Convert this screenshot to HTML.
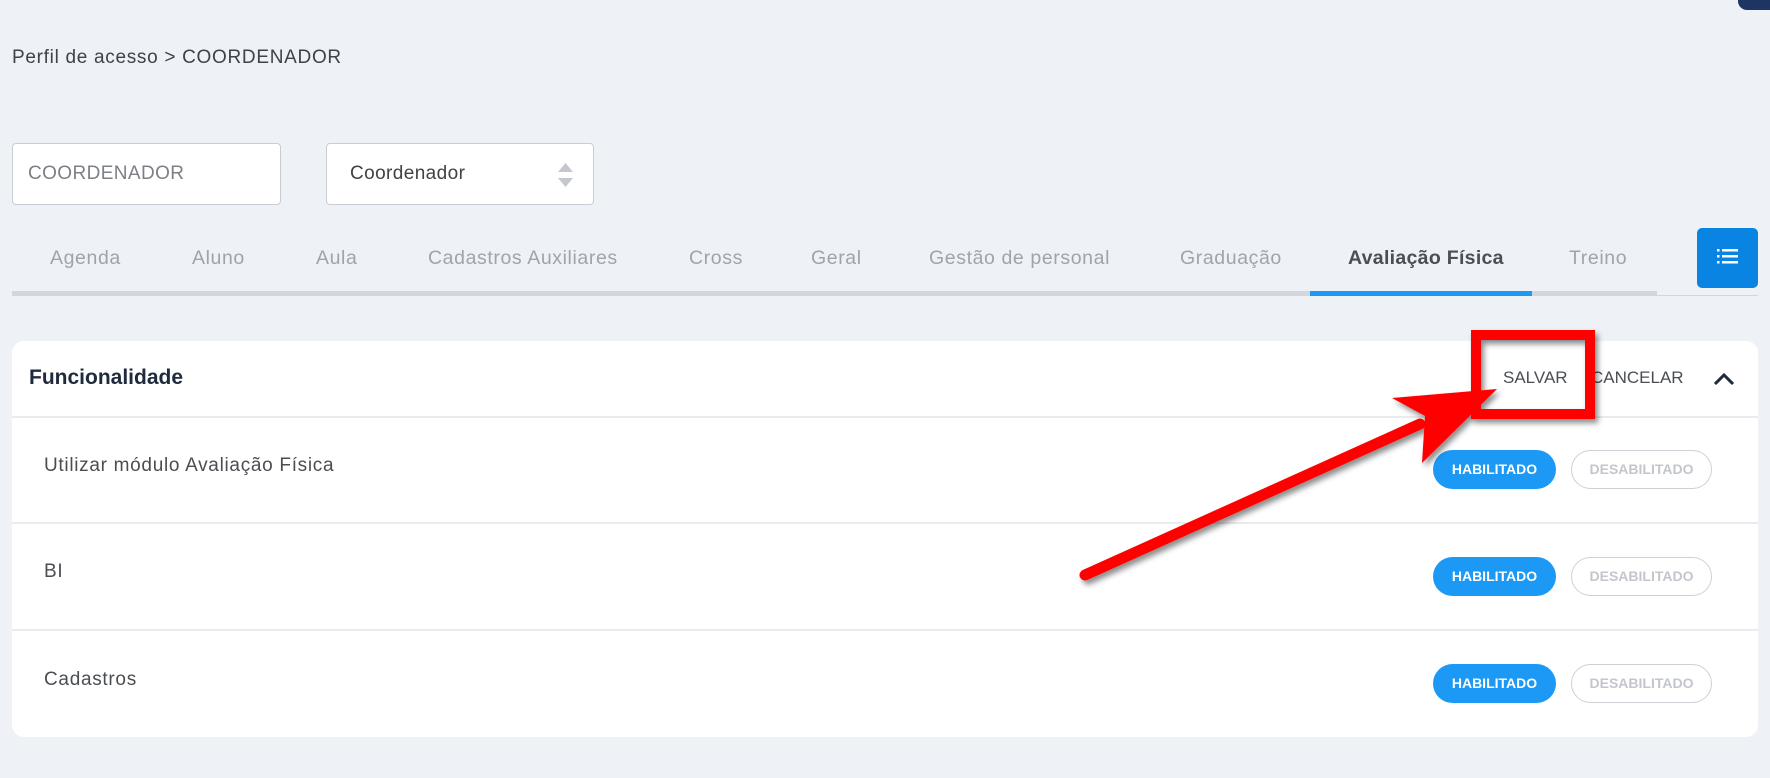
<!DOCTYPE html>
<html><head><meta charset="utf-8">
<style>
*{box-sizing:border-box;margin:0;padding:0}
body{width:1770px;height:778px;background:#eef1f6;font-family:"Liberation Sans",sans-serif;position:relative;overflow:hidden;color:#51555a}
.abs{position:absolute}
.crumb{left:12px;top:47px;font-size:19px;letter-spacing:0.7px;color:#3f4246}
.inp{border:1px solid #c9ccd3;border-radius:4px;background:#fff;height:62px;top:143px;font-size:19px;letter-spacing:0.4px;line-height:60px;padding-left:15px}
.tab{top:247px;font-size:19.5px;letter-spacing:0.6px;color:#a0a4aa;white-space:nowrap}
.card{left:12px;top:341px;width:1746px;height:396px;background:#fff;border-radius:12px}
.line{position:absolute;left:0;right:0;height:2px;background:#e8ebf0}
.row{position:absolute;left:32px;font-size:19px;letter-spacing:0.7px;color:#4a4e53}
.hab{position:absolute;width:123px;height:39px;border-radius:20px;background:#1c99f5;color:#fff;font-size:14px;font-weight:bold;text-align:center;line-height:39px}
.des{position:absolute;width:141px;height:39px;border-radius:20px;border:1.5px solid #cdd0d6;color:#c3c6cc;font-size:14px;font-weight:bold;text-align:center;line-height:36px;background:#fff}
</style></head><body>
<div class="abs" style="left:1738px;top:0;width:32px;height:10px;background:#1e3462;border-radius:0 0 0 9px"></div>
<div class="abs crumb">Perfil de acesso &gt; COORDENADOR</div>
<div class="abs inp" style="left:12px;width:269px;color:#7c8086">COORDENADOR</div>
<div class="abs inp" style="left:326px;width:268px;color:#3f4246;padding-left:23px">Coordenador
 <svg style="position:absolute;right:19px;top:18px" width="17" height="26" viewBox="0 0 17 26"><path d="M8.5 1L16 10H1Z" fill="#c4c7ce"/><path d="M8.5 25L16 16H1Z" fill="#c4c7ce"/></svg></div>

<div class="abs tab" style="left:50px">Agenda</div>
<div class="abs tab" style="left:192px">Aluno</div>
<div class="abs tab" style="left:316px">Aula</div>
<div class="abs tab" style="left:428px">Cadastros Auxiliares</div>
<div class="abs tab" style="left:689px">Cross</div>
<div class="abs tab" style="left:811px">Geral</div>
<div class="abs tab" style="left:929px">Gestão de personal</div>
<div class="abs tab" style="left:1180px">Graduação</div>
<div class="abs tab" style="left:1348px;color:#4b4f55;font-weight:bold;letter-spacing:0.3px">Avaliação Física</div>
<div class="abs tab" style="left:1569px">Treino</div>
<div class="abs" style="left:12px;top:291px;width:1645px;height:5px;background:#d3d6dd"></div>
<div class="abs" style="left:1310px;top:291px;width:222px;height:5px;background:#1c99f5"></div>
<div class="abs" style="left:1657px;top:295px;width:101px;height:1px;background:#d3d6dd"></div>
<div class="abs" style="left:1697px;top:228px;width:61px;height:60px;background:#0a84e3;border-radius:5px">
 <svg style="position:absolute;left:20px;top:20px" width="21" height="17" viewBox="0 0 21 17"><g fill="#fff"><rect x="0" y="1" width="2.5" height="2.5"/><rect x="0" y="7" width="2.5" height="2.5"/><rect x="0" y="13" width="2.5" height="2.5"/><rect x="5" y="1" width="16" height="2.5"/><rect x="5" y="7" width="16" height="2.5"/><rect x="5" y="13" width="16" height="2.5"/></g></svg></div>

<div class="abs card">
 <div class="abs" style="left:17px;top:25px;font-size:21px;font-weight:bold;color:#1f2a3c">Funcionalidade</div>
 <div class="abs" style="left:1491px;top:27px;font-size:17px;color:#4a4e53">SALVAR</div>
 <div class="abs" style="left:1579px;top:27px;font-size:17px;color:#4a4e53">CANCELAR</div>
 <svg class="abs" style="left:1700px;top:30px" width="24" height="16" viewBox="0 0 24 16"><path d="M3 13L12 4L21 13" fill="none" stroke="#1f2a3c" stroke-width="3"/></svg>
 <div class="line" style="top:75px"></div>
 <div class="row" style="top:114px">Utilizar módulo Avaliação Física</div>
 <div class="hab" style="left:1421px;top:109px">HABILITADO</div>
 <div class="des" style="left:1559px;top:109px">DESABILITADO</div>
 <div class="line" style="top:181px"></div>
 <div class="row" style="top:220px">BI</div>
 <div class="hab" style="left:1421px;top:216px">HABILITADO</div>
 <div class="des" style="left:1559px;top:216px">DESABILITADO</div>
 <div class="line" style="top:288px"></div>
 <div class="row" style="top:328px">Cadastros</div>
 <div class="hab" style="left:1421px;top:323px">HABILITADO</div>
 <div class="des" style="left:1559px;top:323px">DESABILITADO</div>
</div>

<svg class="abs" style="left:0;top:0" width="1770" height="778" viewBox="0 0 1770 778">
 <defs><filter id="sh" x="-10%" y="-10%" width="130%" height="130%"><feDropShadow dx="3" dy="4" stdDeviation="3" flood-color="#000" flood-opacity="0.45"/></filter></defs>
 <g filter="url(#sh)">
  <rect x="1476" y="335" width="114" height="79" fill="none" stroke="#ff0000" stroke-width="10"/>
  <line x1="1085" y1="575" x2="1420" y2="424" stroke="#ff0000" stroke-width="11" stroke-linecap="round"/>
  <path d="M1497 389L1392 398L1425 416L1422 463Z" fill="#ff0000"/>
 </g>
</svg>
</body></html>
